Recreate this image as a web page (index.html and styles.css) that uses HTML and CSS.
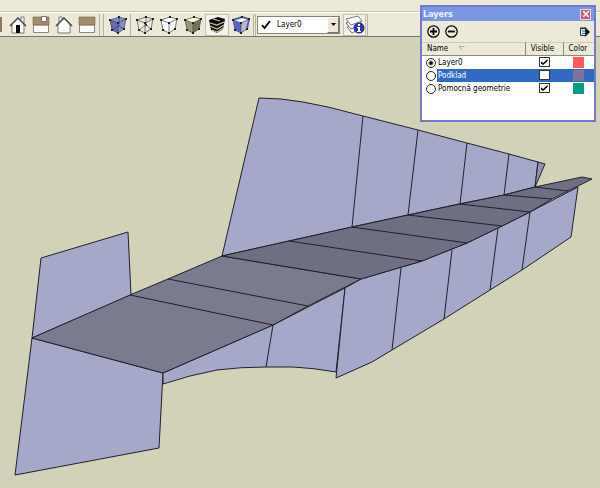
FILE: index.html
```
<!DOCTYPE html>
<html lang="cs">
<head>
    <meta charset="UTF-8">
    <meta name="viewport" content="width=device-width, initial-scale=1.0">
    <title>Layers</title>
    <link rel="stylesheet" href="styles.css">
</head>
<body>
    <!-- Shared cube edges and corner dots -->
    <svg class="defs" aria-hidden="true">
        <symbol id="cube-edges" viewBox="0 0 18 18">
            <path d="M1 4L10 1L17 3L9 7ZM1 4L3 14L9 17L9 7M17 3L15 13L9 17" fill="none" stroke="#45454c" stroke-width=".7"/>
            <path d="M0 3h2v2h-2zM9 0h2v2h-2zM16 2h2v2h-2zM8 6h2v2h-2zM2 13h2v2h-2zM14 12h2v2h-2zM8 16h2v2h-2z" fill="#222"/>
        </symbol>
    </svg>

    <header class="top">
        <div class="menu-strip"></div>
        <div class="toolbar">
            <button class="tool tool-cut" aria-label="Right"><svg width="2" height="17" viewBox="0 0 2 17"><path d="M0 1h2v15H0z" fill="#8d7a60"/></svg></button>
            <button class="tool" aria-label="Front">
                <svg width="18" height="18" viewBox="0 0 18 18"><path d="M12 4V1h3v6" fill="#fff" stroke="#777"/><path d="M3 8L9 2l6 6v9H3z" fill="#fff" stroke="#777"/><path d="M1 10L9 2l8 8" fill="none" stroke="#444" stroke-width="1.5"/><path d="M7 9h4v8H7z" fill="#080808"/></svg>
            </button>
            <button class="tool" aria-label="Top">
                <svg width="18" height="18" viewBox="0 0 18 18"><path d="M1.500 9h15v7.500h-15z" fill="#fff" stroke="#888"/><path d="M1 1h16v8H1z" fill="#a58b69" stroke="#746553" stroke-width=".6"/><path d="M9.500.5h5v5h-5z" fill="#fff" stroke="#777"/></svg>
            </button>
            <button class="tool" aria-label="Back">
                <svg width="18" height="18" viewBox="0 0 18 18"><path d="M4 6V1h3v4" fill="#fff" stroke="#777"/><path d="M3 8L9 2l6 6v9H3z" fill="#fff" stroke="#777"/><path d="M1 10L9 2l8 8" fill="none" stroke="#444" stroke-width="1.500"/></svg>
            </button>
            <button class="tool" aria-label="Left">
                <svg width="18" height="18" viewBox="0 0 18 18"><path d="M1.500 9h15v7.500h-15z" fill="#fff" stroke="#888"/><path d="M1 1h16v8H1z" fill="#a58b69" stroke="#746553" stroke-width=".6"/></svg>
            </button>
            <span class="sep"></span><span class="sep"></span>
            <button class="tool" aria-label="X-ray">
                <svg width="18" height="18" viewBox="0 0 18 18"><path d="M1 4L10 1l7 2-2 10-6 4-6-3z" fill="#858bcb"/><path d="M1 4l8 3v10l-6-3z" fill="#656cb0"/><path d="M10 1v9L3 14M10 10l5 3" stroke="#44476f" fill="none" stroke-width=".8"/><use href="#cube-edges"/></svg>
            </button>
            <span class="sep"></span>
            <div class="styles-group">
                <button class="tool" aria-label="Wireframe">
                    <svg width="18" height="18" viewBox="0 0 18 18"><path d="M10 1v8L3 14M10 9l5 4" stroke="#666" fill="none" stroke-width=".8"/><path d="M9 8h2v2H9z" fill="#333"/><use href="#cube-edges"/></svg>
                </button>
                <button class="tool" aria-label="Hidden line">
                    <svg width="18" height="18" viewBox="0 0 18 18"><path d="M1 4L10 1l7 2-2 10-6 4-6-3z" fill="#fff"/><use href="#cube-edges"/></svg>
                </button>
                <button class="tool" aria-label="Shaded">
                    <svg width="18" height="18" viewBox="0 0 18 18"><path d="M1 4L10 1l7 2-8 4z" fill="#ffffd0"/><path d="M1 4l8 3v10l-6-3z" fill="#9b9777"/><path d="M9 7l8-4-2 10-6 4z" fill="#77745b"/><use href="#cube-edges"/></svg>
                </button>
                <button class="tool pressed" aria-label="Shaded with textures">
                    <svg width="18" height="18" viewBox="0 0 18 18"><path d="M1 4L10 1l7 2-2 10-6 4-6-3z" fill="#080808"/><path d="M5 3l7 2M2 7l7 2 7-3M2 10l7 3 7-4M4 14l5 2 6-4" fill="none" stroke="#c5c2a5" stroke-width="1.300"/></svg>
                </button>
                <button class="tool" aria-label="Monochrome">
                    <svg width="18" height="18" viewBox="0 0 18 18"><path d="M1 4L10 1l7 2-8 4z" fill="#fffff0"/><path d="M1 4l8 3v10l-6-3z" fill="#5961cf"/><path d="M9 7l8-4-2 10-6 4z" fill="#b7b9d0"/><path d="M1 4L10 1l7 2-2 10" fill="none" stroke="#6871df" stroke-width="2"/><use href="#cube-edges"/></svg>
                </button>
            </div>
            <span class="sep tight"></span><span class="sep tight"></span>
            <div class="combo">
                <svg width="10" height="10" viewBox="0 0 10 10"><path d="M1 5l2.500 3L9 1" fill="none" stroke="#000" stroke-width="1.800"/></svg>
                <select aria-label="Active layer">
                    <option>Layer0</option>
                    <option>Podklad</option>
                    <option>Pomocná geometrie</option>
                </select>
                <span class="arrow"><svg width="5" height="3" viewBox="0 0 5 3"><path d="M0 0h5L2.500 3z"/></svg></span>
            </div>
            <button class="tool layers-btn" aria-label="Layer manager">
                <svg width="20" height="20" viewBox="0 0 20 20"><path d="M2 12l5 6 10-5-5-6z" fill="#fff" stroke="#777"/><path d="M1 8l5 6 11-5-5-6z" fill="#f4f4f0" stroke="#666"/><path d="M1 4l5 6 11-4-4-5z" fill="#fff" stroke="#777"/><circle cx="14" cy="13" r="5.500" fill="#2933ad"/><path d="M13 9h2v2h-2zM12 12h3v4h1v1h-4v-1h1v-3h-1z" fill="#fff"/></svg>
            </button>
            <span class="sep"></span>
        </div>
    </header>

    <main class="canvas">
        <svg class="model" viewBox="0 37 600 451" preserveAspectRatio="xMinYMin meet" role="img" aria-label="Model">
            <g class="wall">
                <!-- rear wall -->
                <path d="M222 256L259 98Q281 98 303 102L328 107L363 116L418 130L467 143L509 154L538 162L535 187L504 195L459 204L408 215L352 227L289 241Z"/>
                <path d="M363 116L352 227M418 130L408 215M467 143L460 204M509 154L504 195"/>
                <path class="wall-dark" d="M538 162L545 164L535 187Z"/>
                <!-- left fin -->
                <path d="M41 258L128 232L131 295L32 338Z"/>
                <path d="M32 338L163 373L159 448L15 475Z"/>
                <!-- front wall -->
                <path d="M163 373L273 325L345 288L336 372Q314 368 293 367L266 367Q240 367 217 370Q190 375 163 384Z"/>
                <path d="M273 325L266 367"/>
                <path d="M345 288L361 279L422 261L467 243L502 226L530 212L578 187L571 237L522 270L490 290L444 319L392 350L372 362L336 378Z"/>
                <path d="M401 268L392 350M452 250L444 319M498 228L490 290M530 212L522 270"/>
            </g>
            <g class="floor">
                <path d="M32 338L130 295L168 279L222 256L361 279L308 306L273 325L163 373Z"/>
                <path class="floor-dark" d="M222 256L289 241L352 227L408 215L460 204L504 195L535 187L582 177L592 179L568 191L552 199L530 212L502 226L467 243L422 261L361 279Z"/>
                <path d="M130 295L273 325M168 279L308 306M289 241L422 261M352 227L467 243M408 215L502 226M460 204L530 212M504 195L552 199M535 187L568 191"/>
            </g>
        </svg>
    </main>

    <section class="panel">
        <div class="panel-title">
            <h2>Layers</h2>
            <button class="close" aria-label="Close"><svg width="6" height="6" viewBox="0 0 6 6"><path d="M0 0l6 6M6 0L0 6" stroke="#fff" stroke-width="1.500"/></svg></button>
        </div>
        <div class="panel-tools">
            <button aria-label="Add layer"><svg width="13" height="13" viewBox="0 0 13 13"><circle cx="6.500" cy="6.500" r="5.700" fill="none" stroke="#000" stroke-width="1.200"/><path d="M3 6.500h7M6.500 3v7" stroke="#000" stroke-width="1.800"/></svg></button>
            <button aria-label="Delete layer"><svg width="13" height="13" viewBox="0 0 13 13"><circle cx="6.500" cy="6.500" r="5.700" fill="none" stroke="#000" stroke-width="1.200"/><path d="M3 6.500h7" stroke="#000" stroke-width="1.800"/></svg></button>
            <button class="details" aria-label="Details"><svg width="11" height="12" viewBox="0 0 11 12"><path d="M6 1l5 5-5 5z" fill="#111"/><path d="M1.500 2.500h5v7h-5z" fill="#dce6ee" stroke="#234"/><path d="M1 2h6" stroke="#123"/><path d="M3 5h3M3 7.500h3" stroke="#4a6c86"/></svg></button>
        </div>
        <table>
            <thead>
                <tr>
                    <th class="col-name">Name <svg width="6" height="5" viewBox="0 0 6 5"><path d="M5.500.5h-5L3 4.500" fill="none" stroke="#aaa797"/></svg></th>
                    <th class="col-visible">Visible</th>
                    <th class="col-color">Color</th>
                </tr>
            </thead>
            <tbody>
                <tr>
                    <td><label class="layer"><input type="radio" name="layer" checked><span>Layer0</span></label></td>
                    <td class="mid"><input type="checkbox" aria-label="Layer0 visible" checked></td>
                    <td class="mid"><span class="swatch red"></span></td>
                </tr>
                <tr class="selected">
                    <td><label class="layer"><input type="radio" name="layer"><span>Podklad</span></label></td>
                    <td class="mid"><input type="checkbox" aria-label="Podklad visible"></td>
                    <td class="mid"><span class="swatch mauve"></span></td>
                </tr>
                <tr>
                    <td><label class="layer"><input type="radio" name="layer"><span>Pomocná geometrie</span></label></td>
                    <td class="mid"><input type="checkbox" aria-label="Pomocná geometrie visible" checked></td>
                    <td class="mid"><span class="swatch green"></span></td>
                </tr>
            </tbody>
        </table>
    </section>
</body>
</html>
```

FILE: styles.css
```
* {
    margin: 0;
    padding: 0;
    box-sizing: border-box;
}

body {
    font-family: "DejaVu Sans Condensed", "Noto Sans", sans-serif;
    font-size: 8px;
    color: #000;
    background: #d2d2b9;
    min-height: 100vh;
    display: flex;
    flex-direction: column;
    overflow: hidden;
}

button {
    border: none;
    background: none;
    display: flex;
    align-items: center;
    justify-content: center;
}

.defs {
    position: absolute;
    width: 0;
    height: 0;
}

.top {
    background: #ece9d8;
    border-bottom: 1px solid #77766a;
}

.menu-strip {
    height: 12px;
    border-bottom: 1px solid #c5c2b2;
}

.toolbar {
    display: flex;
    align-items: center;
    height: 24px;
    border-top: 1px solid #fff;
}

.tool {
    flex: none;
    width: 23px;
    height: 22px;
}

.tool-cut {
    width: 6px;
    justify-content: flex-start;
}

.sep {
    width: 1px;
    height: 22px;
    margin: 0 2px 0 1px;
    background: #b5b2a2;
}

.sep.tight {
    margin: 0 1px 0 0;
}

.styles-group {
    display: flex;
}

.styles-group .tool {
    width: 24px;
}

.tool.pressed,
.layers-btn {
    background: #f4f2ea;
    border: 1px solid #c4c1b0;
}

.combo {
    position: relative;
    width: 83px;
    height: 18px;
    margin-right: 3px;
    background: #fff;
    border: 1px solid #85837a;
}

.combo > svg {
    position: absolute;
    left: 3px;
    top: 3px;
}

.combo select {
    appearance: none;
    width: 100%;
    height: 16px;
    padding-left: 19px;
    border: none;
    background: transparent;
    font-family: inherit;
    font-size: 8px;
    color: #000;
}

.combo .arrow {
    position: absolute;
    right: 0;
    top: 0;
    width: 12px;
    height: 16px;
    display: flex;
    align-items: center;
    justify-content: center;
    background: #ece9d8;
    border: 1px solid #fff;
    border-right-color: #77766a;
    border-bottom-color: #77766a;
    pointer-events: none;
}

.canvas {
    flex: 1;
}

.model {
    display: block;
    width: 100%;
}

.wall path,
.floor path {
    stroke: #20202c;
    stroke-width: 1;
    stroke-linejoin: round;
}

.wall path {
    fill: #a5a8c8;
}

.wall .wall-dark {
    fill: #9293b0;
}

.floor path {
    fill: #7b7b90;
}

.floor .floor-dark {
    fill: #6f6f84;
}

/* Floating layers window */
.panel {
    position: absolute;
    top: 5px;
    right: 4px;
    width: 176px;
    padding-bottom: 25px;
    background: #fff;
    border: 2px solid #7379d0;
}

.panel-title {
    display: flex;
    align-items: center;
    justify-content: space-between;
    height: 14px;
    padding: 0 3px 0 1px;
    background: linear-gradient(90deg, #7a96df, #7799e6);
}

.panel-title h2 {
    font-size: 9px;
    line-height: 14px;
    color: #eef1fd;
}

.close {
    width: 11px;
    height: 11px;
    background: #c2607a;
    border: 1px solid #e8d8e6;
}

.panel-tools {
    display: flex;
    align-items: center;
    gap: 5px;
    height: 21px;
    padding: 0 4px 0 5px;
    background: #ece9d8;
}

.details {
    margin-left: auto;
}

table {
    width: 100%;
    table-layout: fixed;
    border-collapse: collapse;
}

th {
    height: 13px;
    padding-left: 5px;
    font-size: 8px;
    font-weight: normal;
    line-height: 12px;
    text-align: left;
    background: #ece9d8;
    border-top: 1px solid #d0cdbd;
    border-bottom: 1px solid #8b897b;
    border-right: 1px solid #8b897b;
}

th svg {
    margin-left: 8px;
}

.col-name {
    width: 60%;
}

.col-visible {
    width: 22%;
}

.col-color {
    width: 18%;
    border-right: none;
}

td {
    height: 13px;
    line-height: 13px;
    vertical-align: middle;
}

.layer {
    display: flex;
    align-items: center;
    padding-left: 4px;
    background: #fff;
}

.layer span {
    flex: 1;
    height: 13px;
    margin-left: 1px;
    padding-left: 1px;
    white-space: nowrap;
}

.selected .layer span,
.selected .mid {
    background: #3169c6;
    color: #fff;
}

.mid {
    text-align: center;
    font-size: 0;
}

input[type="radio"] {
    appearance: none;
    width: 10px;
    height: 10px;
    border: 1px solid #222;
    border-radius: 50%;
    background: #fff;
}

input[type="radio"]:checked {
    background: radial-gradient(circle, #000 1px, #fff 3px);
}

input[type="checkbox"] {
    appearance: none;
    width: 11px;
    height: 10px;
    border: 1px solid #333;
    background: #fff;
    vertical-align: middle;
}

/* tick mark */
input[type="checkbox"]:checked::before {
    content: "";
    display: block;
    width: 7px;
    height: 6px;
    margin: 1px;
    background: #000;
    clip-path: polygon(0 35%, 35% 65%, 100% 0, 100% 35%, 35% 100%, 0 70%);
}

.swatch {
    display: inline-block;
    width: 11px;
    height: 11px;
    vertical-align: middle;
}

.red {
    background: #ff5a5a;
}

.mauve {
    background: #7c7396;
}

.green {
    background: #079b87;
}
```
